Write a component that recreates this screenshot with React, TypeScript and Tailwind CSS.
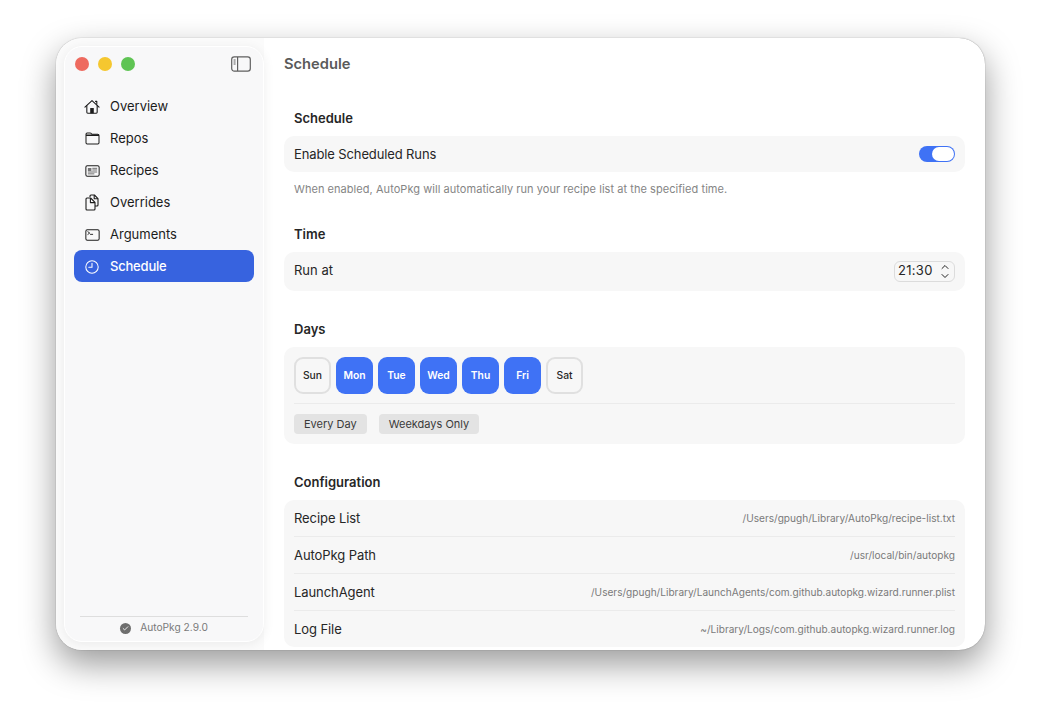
import { Check, ChevronDown, ChevronUp } from 'lucide-react';
import type { ReactNode } from 'react';

function HomeIcon() {
  return (
    <svg width="16" height="16" viewBox="0 0 17 17" fill="none" stroke="currentColor" strokeWidth="1.15" strokeLinejoin="round" strokeLinecap="round">
      <path d="M1 8.6 8.5 1.7 16 8.6" />
      <path d="M3 7v7.2c0 .6.4 1 1 1h9c.6 0 1-.4 1-1V7" />
      <path d="M12.2 2.5h1.4v3" />
      <rect x="6.6" y="9.6" width="3.8" height="5.6" fill="currentColor" stroke="none" />
    </svg>
  );
}

function FolderIcon() {
  return (
    <svg width="15" height="13" viewBox="0 0 16 14" fill="none" stroke="currentColor" strokeWidth="1.1">
      <path d="M1 11.6V2.4c0-.8.5-1.3 1.3-1.3h3.2c.5 0 .8.2 1.1.5l.7.8h6.4c.8 0 1.3.5 1.3 1.3v7.9c0 .8-.5 1.3-1.3 1.3H2.3c-.8 0-1.3-.5-1.3-1.3Z" />
      <path d="M1 3.4h14" strokeWidth="1.6" />
    </svg>
  );
}

function RecipesIcon() {
  return (
    <svg width="15" height="12" viewBox="0 0 16 13" fill="none" stroke="currentColor" strokeWidth="1.1">
      <rect x="0.8" y="0.8" width="14.4" height="11.4" rx="1.6" />
      <path d="M3 3.2h3.8v3.2H3z" fill="currentColor" strokeWidth="0" opacity=".6" />
      <path d="M7.8 3.6h5.2M7.8 5.4h5.2M3 7.6h10M3 9.6h7" strokeWidth="0.9" opacity=".75" />
    </svg>
  );
}

function OverridesIcon() {
  return (
    <svg width="14" height="17" viewBox="0 0 14 17" fill="none" stroke="currentColor" strokeWidth="1.1" strokeLinejoin="round">
      <path d="M5 3V2c0-.6.4-1 1-1h3.4L13 4.6V11c0 .6-.4 1-1 1h-2" />
      <path d="M9.2 1v3.8H13" />
      <path d="M1 5c0-.6.4-1 1-1h3.6L10 8.4v6.6c0 .6-.4 1-1 1H2c-.6 0-1-.4-1-1Z" />
      <path d="M5.4 4v4.6H10" />
    </svg>
  );
}

function TerminalIcon() {
  return (
    <svg width="15" height="12" viewBox="0 0 16 13" fill="none" stroke="currentColor" strokeWidth="1.1" strokeLinecap="round">
      <rect x="0.8" y="0.8" width="14.4" height="11.4" rx="1.6" />
      <path d="M3 3 5 4.4 3 5.8" strokeWidth="1" />
      <path d="M5.8 5.8h2.4" strokeWidth="1" />
    </svg>
  );
}

function ClockIcon() {
  return (
    <svg width="14" height="14" viewBox="0 0 14 14" fill="none" stroke="currentColor" strokeWidth="1.05" strokeLinecap="round">
      <circle cx="7" cy="7" r="6.2" />
      <path d="M7 3.2V7.2H3.8" />
    </svg>
  );
}

function SidebarIcon() {
  return (
    <svg width="20" height="16" viewBox="0 0 20 16" fill="none" stroke="#5f5f5f" strokeWidth="1.2">
      <rect x="0.7" y="0.9" width="18.6" height="14.2" rx="2.6" />
      <path d="M6.6 1v14" />
      <path d="M2.6 4h2M2.6 6h2M2.6 8h2" strokeWidth="1" />
    </svg>
  );
}

const navItems = [
  { label: 'Overview', icon: <HomeIcon /> },
  { label: 'Repos', icon: <FolderIcon /> },
  { label: 'Recipes', icon: <RecipesIcon /> },
  { label: 'Overrides', icon: <OverridesIcon /> },
  { label: 'Arguments', icon: <TerminalIcon /> },
  { label: 'Schedule', icon: <ClockIcon />, active: true },
];

const days = [
  { label: 'Sun', on: false },
  { label: 'Mon', on: true },
  { label: 'Tue', on: true },
  { label: 'Wed', on: true },
  { label: 'Thu', on: true },
  { label: 'Fri', on: true },
  { label: 'Sat', on: false },
];

const configRows = [
  { label: 'Recipe List', value: '/Users/gpugh/Library/AutoPkg/recipe-list.txt' },
  { label: 'AutoPkg Path', value: '/usr/local/bin/autopkg' },
  { label: 'LaunchAgent', value: '/Users/gpugh/Library/LaunchAgents/com.github.autopkg.wizard.runner.plist' },
  { label: 'Log File', value: '~/Library/Logs/com.github.autopkg.wizard.runner.log' },
];

function SectionTitle({ children }: { children: ReactNode }) {
  return <h2 className="px-[10px] text-[13px] leading-[18px] font-semibold text-[#262626]">{children}</h2>;
}

export default function App() {
  return (
    <div className="h-[724px] w-[1041px] overflow-hidden bg-white pt-[38px] pl-[56px] font-['Inter',sans-serif]">
      <div className="flex h-[612px] w-[929px] overflow-hidden rounded-[26px] bg-white shadow-[0_0_1px_rgba(0,0,0,0.5),0_14px_34px_rgba(0,0,0,0.4)]">
        {/* Sidebar */}
        <div className="bg-[#fbfbfb] p-2 pr-0">
          <aside className="flex h-[596px] w-[200px] flex-col rounded-[18px] border border-white bg-[#f8f8f9] shadow-[0_2px_12px_rgba(0,0,0,0.07)]">
            <div className="flex h-[34px] items-center justify-between pr-[12px] pl-[10px]">
              <div className="flex gap-[9px]">
                <span className="h-[14px] w-[14px] rounded-full bg-[#ee6a5f]" />
                <span className="h-[14px] w-[14px] rounded-full bg-[#f5c72f]" />
                <span className="h-[14px] w-[14px] rounded-full bg-[#5fc454]" />
              </div>
              <SidebarIcon />
            </div>
            <nav className="mt-[9px] flex flex-col px-[9px]">
              {navItems.map((item) => (
                <div
                  key={item.label}
                  className={`flex h-[32px] items-center rounded-[8px] pt-[1px] text-[13px] ${item.active ? 'bg-[#3763df] font-medium text-white' : 'text-[#1c1c1c]'}`}
                >
                  <span className="flex w-[36px] shrink-0 justify-center">{item.icon}</span>
                  <span className={item.active ? 'tracking-[-0.2px]' : ''}>{item.label}</span>
                </div>
              ))}
            </nav>
            <div className="mx-[15px] mt-auto flex h-[25px] items-center justify-center gap-[9px] border-t border-[#dedede] pb-[2px] text-[10.2px] text-[#7a7a7a]">
              <span className="flex h-[11px] w-[11px] items-center justify-center rounded-full bg-[#6e6e6e]">
                <Check size={7} color="white" strokeWidth={3} />
              </span>
              <span>AutoPkg 2.9.0</span>
            </div>
          </aside>
        </div>

        {/* Main */}
        <main className="flex w-[721px] flex-col px-[20px]">
          <h1 className="mt-[16px] h-[20px] text-[14.7px] leading-[20px] font-semibold text-[#5a5a5a]">Schedule</h1>

          <div className="mt-[35px]">
            <SectionTitle>Schedule</SectionTitle>
            <div className="mt-[9px] flex h-[36px] items-center justify-between rounded-[10px] bg-[#f7f7f7] px-[10px] pt-[1px] text-[13px] tracking-[-0.12px] text-[#262626]">
              Enable Scheduled Runs
              <span className="-mt-[1px] flex h-[16px] w-[36px] justify-end rounded-full bg-[#3f72f5] p-px">
                <span className="h-[14px] w-[22px] rounded-full bg-white" />
              </span>
            </div>
            <p className="mt-[10px] px-[10px] text-[11px] leading-[14px] tracking-[0.05px] text-[#858585]">
              When enabled, AutoPkg will automatically run your recipe list at the specified time.
            </p>
          </div>

          <div className="mt-[29px]">
            <SectionTitle>Time</SectionTitle>
            <div className="mt-[9px] flex h-[39px] items-center justify-between rounded-[10px] bg-[#f7f7f7] px-[10px] pb-[1px] text-[13px] text-[#262626]">
              Run at
              <span className="flex h-[21px] w-[61px] items-center justify-between rounded-[6px] border border-[#dcdcdc] px-[3px] text-[13px] tracking-[0.3px]">
                21:30
                <span className="flex flex-col text-[#222222]">
                  <ChevronUp size={12} strokeWidth={2} className="-mb-[3px]" />
                  <ChevronDown size={12} strokeWidth={2} />
                </span>
              </span>
            </div>
          </div>

          <div className="mt-[29px]">
            <SectionTitle>Days</SectionTitle>
            <div className="mt-[9px] h-[97px] rounded-[10px] bg-[#f7f7f7] px-[10px] pt-[10px]">
              <div className="flex gap-[5px]">
                {days.map((day) => (
                  <span
                    key={day.label}
                    className={`flex h-[37px] w-[37px] items-center justify-center rounded-[9px] text-[10.3px] font-medium ${day.on ? 'bg-[#3f72f5] font-semibold text-white' : 'border-2 border-[#e0e0e0] text-[#262626]'}`}
                  >
                    {day.label}
                  </span>
                ))}
              </div>
              <div className="mt-[9px] border-t border-[#ebebeb] pt-[10px]">
                <div className="flex gap-[12px] text-[11px] text-[#3a3a3a]">
                  <span className="flex h-[20px] items-center rounded-[4px] bg-[#e3e3e3] px-[10px]">Every Day</span>
                  <span className="flex h-[20px] items-center rounded-[4px] bg-[#e3e3e3] px-[10px]">Weekdays Only</span>
                </div>
              </div>
            </div>
          </div>

          <div className="mt-[29px]">
            <SectionTitle>Configuration</SectionTitle>
            <div className="mt-[9px] h-[147px] rounded-[10px] bg-[#f7f7f7] px-[10px]">
              {configRows.map((row, i) => (
                <div
                  key={row.label}
                  className={`flex h-[37px] items-center justify-between text-[13px] tracking-[-0.08px] text-[#262626] ${i < 3 ? 'border-b border-[#ebebeb] pt-[1px]' : ''}`}
                >
                  {row.label}
                  <span className="text-[10.1px] tracking-normal text-[#7a7a7a]">{row.value}</span>
                </div>
              ))}
            </div>
          </div>
        </main>
      </div>
    </div>
  );
}
